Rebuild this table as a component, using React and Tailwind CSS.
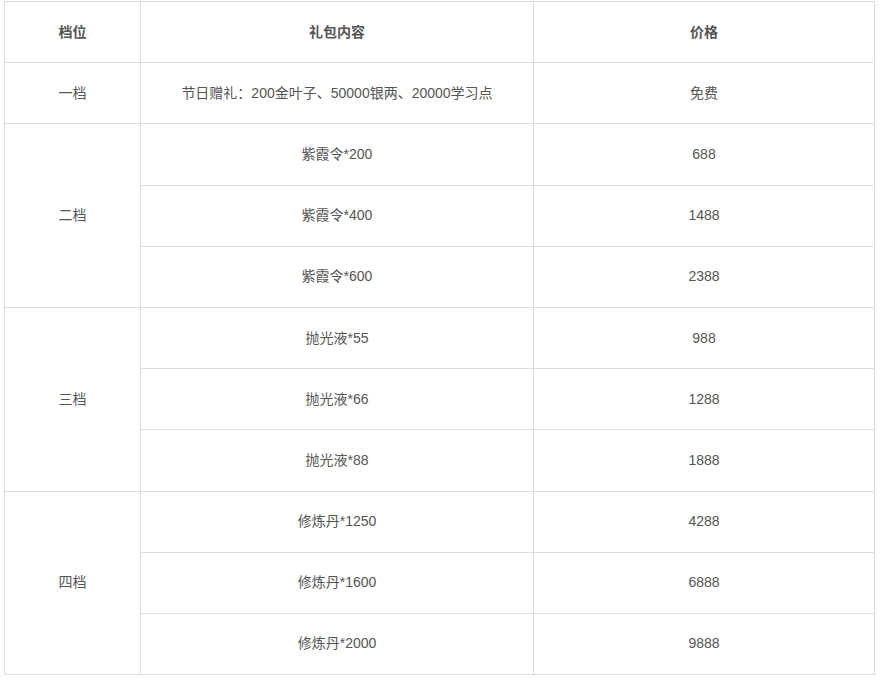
import React from "react";

const groups = [
  { tier: "一档", items: [["节日赠礼：200金叶子、50000银两、20000学习点", "免费"]] },
  {
    tier: "二档",
    items: [
      ["紫霞令*200", "688"],
      ["紫霞令*400", "1488"],
      ["紫霞令*600", "2388"],
    ],
  },
  {
    tier: "三档",
    items: [
      ["抛光液*55", "988"],
      ["抛光液*66", "1288"],
      ["抛光液*88", "1888"],
    ],
  },
  {
    tier: "四档",
    items: [
      ["修炼丹*1250", "4288"],
      ["修炼丹*1600", "6888"],
      ["修炼丹*2000", "9888"],
    ],
  },
];

const cell = "border border-[#dddddd] text-center align-middle h-[61.2px] p-0";

export default function App() {
  return (
    <div
      className="bg-white w-[880px] h-[680px] pt-px pl-1 text-[14px] text-[#555555]"
      style={{ fontFamily: '"Liberation Sans", "Noto Sans CJK SC", sans-serif' }}
    >
      <table className="border-collapse w-[870px] table-fixed">
        <colgroup>
          <col className="w-[136px]" />
          <col className="w-[393px]" />
          <col className="w-[341px]" />
        </colgroup>
        <thead>
          <tr>
            <th className={`${cell} font-bold`}>档位</th>
            <th className={`${cell} font-bold`}>礼包内容</th>
            <th className={`${cell} font-bold`}>价格</th>
          </tr>
        </thead>
        <tbody>
          {groups.map((g) =>
            g.items.map((it, i) => (
              <tr key={g.tier + i}>
                {i === 0 && (
                  <td className={cell} rowSpan={g.items.length}>
                    {g.tier}
                  </td>
                )}
                <td className={cell}>{it[0]}</td>
                <td className={cell}>{it[1]}</td>
              </tr>
            ))
          )}
        </tbody>
      </table>
    </div>
  );
}
